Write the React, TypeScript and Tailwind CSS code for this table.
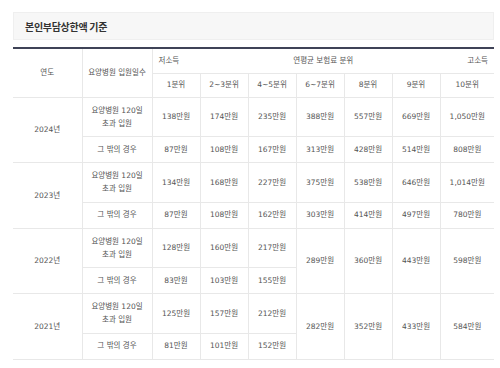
import React from "react";

const font = { fontFamily: '"DejaVu Sans", "Noto Sans CJK KR", sans-serif' };

type Row = {
  year?: string;
  kind: "long" | "other";
  vals: (string | null)[];
  span?: boolean; // whether cells 6-7..10 span 2 rows
};

const td = "border-b border-r border-[#e8e8e8] text-center align-middle";
const tdLast = "border-b border-[#e8e8e8] text-center align-middle";

function LongLabel() {
  return (
    <div className="leading-[13px]">
      요양병원 120일
      <br />
      초과 입원
    </div>
  );
}

type Block = {
  year: string;
  a: string[];
  b: string[];
  merged?: string[];
};

const blocks: Block[] = [
  {
    year: "2024년",
    a: ["138만원", "174만원", "235만원", "388만원", "557만원", "669만원", "1,050만원"],
    b: ["87만원", "108만원", "167만원", "313만원", "428만원", "514만원", "808만원"],
  },
  {
    year: "2023년",
    a: ["134만원", "168만원", "227만원", "375만원", "538만원", "646만원", "1,014만원"],
    b: ["87만원", "108만원", "162만원", "303만원", "414만원", "497만원", "780만원"],
  },
  {
    year: "2022년",
    a: ["128만원", "160만원", "217만원"],
    b: ["83만원", "103만원", "155만원"],
    merged: ["289만원", "360만원", "443만원", "598만원"],
  },
  {
    year: "2021년",
    a: ["125만원", "157만원", "212만원"],
    b: ["81만원", "101만원", "152만원"],
    merged: ["282만원", "352만원", "433만원", "584만원"],
  },
];

export default function App() {
  return (
    <div className="w-[500px] h-[368px] bg-white pt-[12px] pl-[13px] pr-[6px] overflow-hidden" style={font}>
      <div className="h-[28px] bg-[#f7f7f7] border border-[#efefef] flex items-center pl-[11px]">
        <span className="text-[10px] font-bold text-[#333] tracking-[-0.3px]" style={{ fontFamily: '"Noto Sans CJK KR", sans-serif' }}>
          본인부담상한액 기준
        </span>
      </div>
      <table className="mt-[7px] w-[481px] table-fixed border-collapse border-t-2 border-t-[#3f4357] border-b border-b-[#bdbdbd] text-[7.5px] text-[#555]">
        <colgroup>
          <col className="w-[69px]" />
          <col className="w-[70px]" />
          <col className="w-[48px]" />
          <col className="w-[48px]" />
          <col className="w-[48px]" />
          <col className="w-[48px]" />
          <col className="w-[48px]" />
          <col className="w-[48px]" />
          <col className="w-[54px]" />
        </colgroup>
        <thead>
          <tr className="h-[25px]">
            <th rowSpan={2} className={`${td} font-normal`}>연도</th>
            <th rowSpan={2} className={`${td} font-normal`}>요양병원 입원일수</th>
            <th colSpan={7} className={`${tdLast} font-normal`}>
              <div className="flex justify-between px-[6px]">
                <span>저소득</span>
                <span>연평균 보험료 분위</span>
                <span>고소득</span>
              </div>
            </th>
          </tr>
          <tr className="h-[24px]">
            <th className={`${td} font-normal`}>1분위</th>
            <th className={`${td} font-normal`}>2~3분위</th>
            <th className={`${td} font-normal`}>4~5분위</th>
            <th className={`${td} font-normal`}>6~7분위</th>
            <th className={`${td} font-normal`}>8분위</th>
            <th className={`${td} font-normal`}>9분위</th>
            <th className={`${tdLast} font-normal`}>10분위</th>
          </tr>
        </thead>
        <tbody>
          {blocks.map((b) => (
            <React.Fragment key={b.year}>
              <tr className="h-[39.5px]">
                <td rowSpan={2} className={td}>{b.year}</td>
                <td className={td}><LongLabel /></td>
                {b.a.map((v, i) => (
                  <td key={i} className={!b.merged && i === b.a.length - 1 ? tdLast : td}>{v}</td>
                ))}
                {b.merged &&
                  b.merged.map((v, i) => (
                    <td key={"m" + i} rowSpan={2} className={i === b.merged!.length - 1 ? tdLast : td}>{v}</td>
                  ))}
              </tr>
              <tr className="h-[26px]">
                <td className={td}>그 밖의 경우</td>
                {b.b.map((v, i) => (
                  <td key={i} className={!b.merged && i === b.b.length - 1 ? tdLast : td}>{v}</td>
                ))}
              </tr>
            </React.Fragment>
          ))}
        </tbody>
      </table>
    </div>
  );
}
